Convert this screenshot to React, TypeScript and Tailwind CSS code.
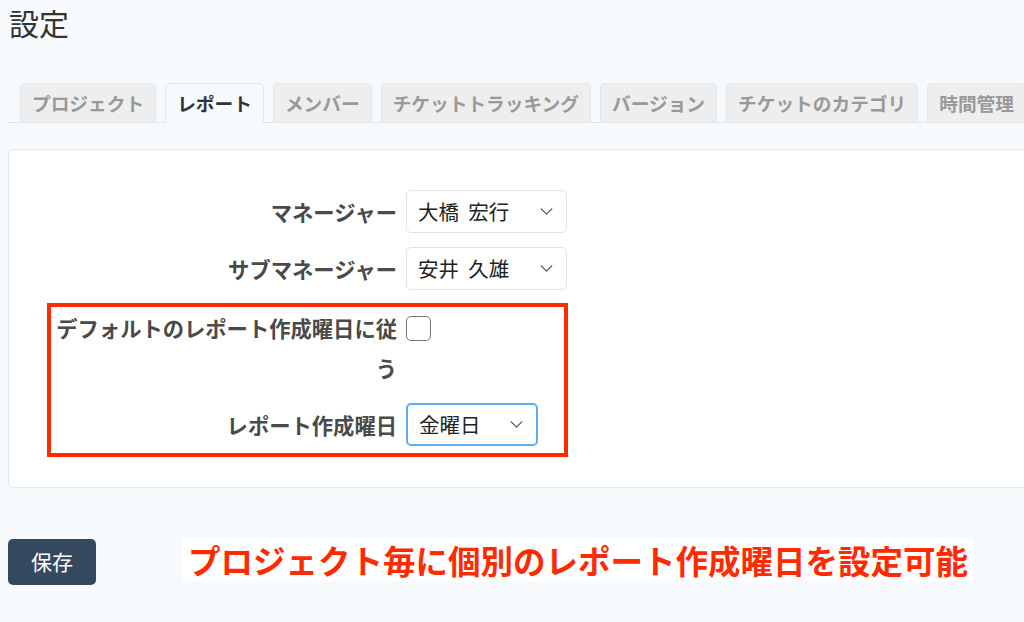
import { ChevronDown } from 'lucide-react';

const TABS = [
  { label: 'プロジェクト', active: false },
  { label: 'レポート', active: true },
  { label: 'メンバー', active: false },
  { label: 'チケットトラッキング', active: false },
  { label: 'バージョン', active: false },
  { label: 'チケットのカテゴリ', active: false },
  { label: '時間管理', active: false },
];

function FakeSelect({ value, width, focused }: { value: string; width: string; focused?: boolean }) {
  return (
    <div
      className={`flex h-[43px] items-center justify-between rounded-[5px] bg-white pl-[11px] pr-[9px] text-[20.5px] text-[#222] ${width} ${
        focused ? 'border-2 border-[#62aef3]' : 'border border-[#dde4ec]'
      }`}
    >
      <span className="whitespace-pre">{value}</span>
      <ChevronDown className="h-[21px] w-[21px] text-[#555]" strokeWidth={1.5} />
    </div>
  );
}

export default function App() {
  return (
    <div
      className="min-h-screen overflow-hidden bg-[#f7fafd] px-2"
      style={{ fontFamily: '"Noto Sans CJK JP", "Noto Sans", sans-serif' }}
    >
      <h1 className="pl-[1px] pt-[4px] text-[30px] font-normal leading-[36px] text-[#333]">設定</h1>

      {/* tabs */}
      <div className="-mr-4 mt-[43px] flex h-[40px] items-end gap-[9px] border-b border-[#dfe7ef] pl-3">
        {TABS.map((t) => (
          <div
            key={t.label}
            className={`flex shrink-0 items-center whitespace-nowrap rounded-t-[5px] border border-b-0 border-[#dfe7ef] px-[11px] text-[18.7px] font-bold ${
              t.active ? '-mb-px h-[40px] bg-[#f7fafd] text-[#333]' : 'h-[39px] bg-[#eeeeee] text-[#999]'
            }`}
          >
            {t.label}
          </div>
        ))}
      </div>

      {/* panel */}
      <div className="-mr-4 mt-[26px] rounded-[5px] border border-[#e1e8ef] bg-white pb-[30px] pl-[46px] pt-[40px]">
        <div className="flex items-center gap-[9px]">
          <div className="w-[342px] text-right text-[21.3px] font-bold text-[#4a4a4a]">マネージャー</div>
          <FakeSelect value="大橋  宏行" width="w-[161px]" />
        </div>
        <div className="mt-[14px] flex items-center gap-[9px]">
          <div className="w-[342px] text-right text-[21.3px] font-bold text-[#4a4a4a]">サブマネージャー</div>
          <FakeSelect value="安井  久雄" width="w-[161px]" />
        </div>

        <div className="-ml-[8px] mt-[13px] w-[521px] border-[4px] border-[#ff2a00] pb-[7px] pl-[4px] pt-[1px]">
          <div className="flex items-start gap-[9px]">
            <div className="w-[342px] text-right text-[21.3px] font-bold leading-[40px] text-[#4a4a4a]">
              デフォルトのレポート作成曜日に従う
            </div>
            <div className="mt-[8px] h-[25px] w-[25px] rounded-[5px] border-[1.5px] border-[#777] bg-white" />
          </div>
          <div className="mt-[15px] flex items-center gap-[9px]">
            <div className="w-[342px] text-right text-[21.3px] font-bold text-[#4a4a4a]">レポート作成曜日</div>
            <FakeSelect value="金曜日" width="w-[132px]" focused />
          </div>
        </div>
      </div>

      {/* footer */}
      <div className="mt-[51px] flex items-start">
        <button className="h-[46px] w-[88px] rounded-[5px] bg-[#34495e] text-[21px] text-white">保存</button>
        <div className="-mt-px ml-[86px] h-[43px] bg-white px-[6px] text-[32.5px] font-bold leading-[43px] text-[#ff2a00]">
          プロジェクト毎に個別のレポート作成曜日を設定可能
        </div>
      </div>
    </div>
  );
}
